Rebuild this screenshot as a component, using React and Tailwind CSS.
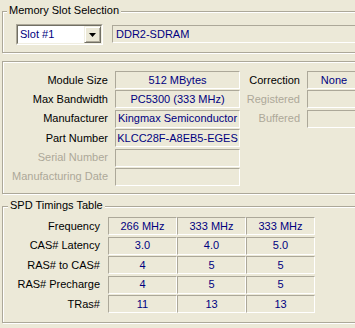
import React from "react";

const FONT = { fontFamily: '"Liberation Sans", Arial, sans-serif' };

function Group({ title, titleLeft, className, children }) {
  return (
    <div
      className={`relative border border-[#aca899] shadow-[1px_1px_0_#ffffff,inset_1px_1px_0_#ffffff] ${className}`}
    >
      {title && (
        <span
          className={`absolute top-[-9px] ${titleLeft} px-[2px] bg-[#ece9d8] text-black text-[11px] leading-[14px] whitespace-nowrap`}
        >
          {title}
        </span>
      )}
      {children}
    </div>
  );
}

function Field({ children, className = "" }) {
  return (
    <div
      className={`h-[18px] border border-t-[#aca899] border-l-[#aca899] border-r-white border-b-white flex items-center justify-center text-[#000080] text-[11px] leading-none whitespace-nowrap overflow-hidden ${className}`}
    >
      {children}
    </div>
  );
}

function Label({ children, disabled, className = "" }) {
  return (
    <div
      className={`h-[18px] flex items-center justify-end text-[11px] leading-none whitespace-nowrap ${
        disabled ? "text-[#aca899]" : "text-black"
      } ${className}`}
    >
      {children}
    </div>
  );
}

function Combo() {
  return (
    <div className="w-[87px] h-[21px] border border-t-[#aca899] border-l-[#aca899] border-r-white border-b-white">
      <div className="w-full h-full border border-t-[#716f64] border-l-[#716f64] border-r-[#f1efe2] border-b-[#f1efe2] bg-white flex">
        <div className="flex-1 flex items-center pl-[2px] text-[#000080] text-[11px] leading-none">
          Slot #1
        </div>
        <div className="w-[17px] h-full border border-t-[#f1efe2] border-l-[#f1efe2] border-r-[#716f64] border-b-[#716f64] bg-[#ece9d8] flex items-center justify-center shadow-[inset_1px_1px_0_#ffffff,inset_-1px_-1px_0_#aca899]">
          <svg width="7" height="4" viewBox="0 0 7 4">
            <path d="M0 0H7L3.5 4Z" fill="#000" />
          </svg>
        </div>
      </div>
    </div>
  );
}

export default function App() {
  const info = [
    ["Module Size", "512 MBytes", false],
    ["Max Bandwidth", "PC5300 (333 MHz)", false],
    ["Manufacturer", "Kingmax Semiconductor", false],
    ["Part Number", "KLCC28F-A8EB5-EGES", false],
    ["Serial Number", "", true],
    ["Manufacturing Date", "", true],
  ];
  const right = [
    ["Correction", "None", false],
    ["Registered", "", true],
    ["Buffered", "", true],
  ];
  const timings = [
    ["Frequency", "266 MHz", "333 MHz", "333 MHz"],
    ["CAS# Latency", "3.0", "4.0", "5.0"],
    ["RAS# to CAS#", "4", "5", "5"],
    ["RAS# Precharge", "4", "5", "5"],
    ["TRas#", "11", "13", "13"],
  ];

  return (
    <div className="w-[355px] h-[328px] overflow-hidden bg-[#ece9d8]" style={FONT}>
      <div className="w-[364px] px-[2px] flex flex-col">
        <Group title="Memory Slot Selection" titleLeft="left-[4px]" className="mt-[11px] h-[42px]">
          <div className="flex items-start pl-[13px] pt-[12px] gap-[9px]">
            <Combo />
            <Field className="flex-1 mt-[1px] justify-start pl-[3px]">DDR2-SDRAM</Field>
          </div>
        </Group>

        <Group className="mt-[8px] h-[133px]">
          <div className="grid grid-cols-[112px_125px_67px_54px] gap-y-[1.4px] pt-[9px]">
            {info.map(([l, v, d], i) => (
              <React.Fragment key={l}>
                <Label disabled={d} className="pr-[7px]">{l}</Label>
                <Field>{v}</Field>
                {i < 3 ? (
                  <>
                    <Label disabled={right[i][2]} className="pr-[7px]">{right[i][0]}</Label>
                    <Field>{right[i][1]}</Field>
                  </>
                ) : (
                  <>
                    <div />
                    <div />
                  </>
                )}
              </React.Fragment>
            ))}
          </div>
        </Group>

        <Group title="SPD Timings Table" titleLeft="left-[5px]" className="mt-[12px] h-[117px]">
          <div className="grid grid-cols-[105px_69px_69px_69px] gap-y-[1.5px] pt-[10px]">
            {timings.map(([l, a, b, c]) => (
              <React.Fragment key={l}>
                <Label className="pr-[8px]">{l}</Label>
                <Field>{a}</Field>
                <Field>{b}</Field>
                <Field>{c}</Field>
              </React.Fragment>
            ))}
          </div>
        </Group>
      </div>
    </div>
  );
}
